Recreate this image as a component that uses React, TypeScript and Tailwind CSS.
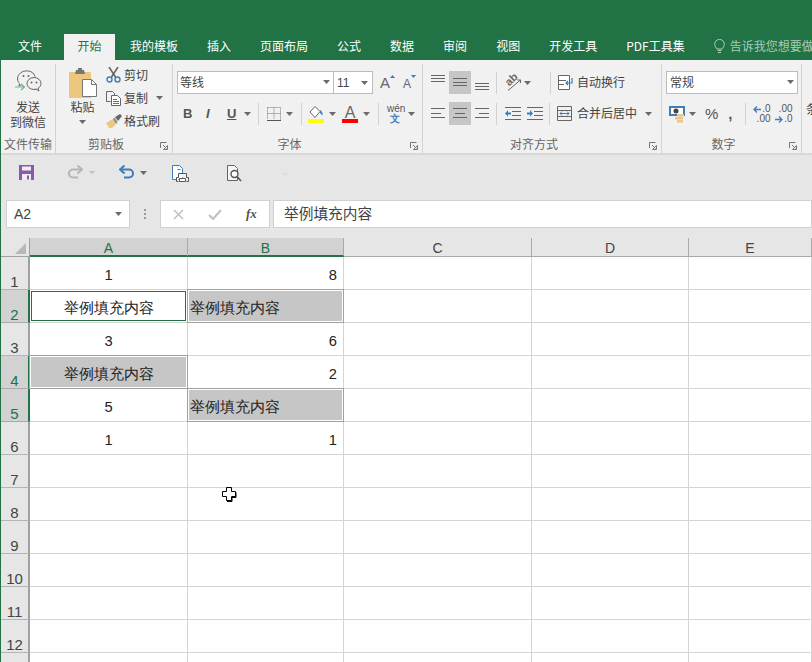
import type { ReactNode } from 'react'

const cjk = { fontFamily: '"Noto Sans CJK SC", "Liberation Sans", sans-serif' }

const Caret = ({ className = '' }: { className?: string }) => (
  <svg width="7" height="4" viewBox="0 0 7 4" className={`shrink-0 ${className}`}>
    <path d="M0 0h7L3.500 4z" fill="#6a6a6a" />
  </svg>
)

const Sep = ({ h = 'h-[22px]', className = '' }: { h?: string, className?: string }) => (
  <div className={`w-px bg-[#d2d2d2] shrink-0 ${h} ${className}`} />
)

const Launcher = () => (
  <svg width="8" height="8" viewBox="0 0 8 8" className="absolute right-[4px] bottom-[4px]">
    <path d="M0.500 6V0.500H6.500" fill="none" stroke="#777" />
    <path d="M3 3l3.500 3.500M7.500 3.500v4h-4z" fill="none" stroke="#777" />
  </svg>
)

const Group = ({ w, label, launcher, children }: { w: string, label: string, launcher?: boolean, children: ReactNode }) => (
  <div className={`${w} shrink-0 flex flex-col h-[90px] mt-[4px] border-r border-[#d2d2d2]`}>
    <div className="flex-1 min-h-0">{children}</div>
    <div className={`relative h-[18px] text-[12px] leading-[16px] text-center text-[#666] ${launcher ? 'pr-[16px]' : ''}`}>
      {label}
      {launcher && <Launcher />}
    </div>
  </div>
)

const AlignBtn = ({ active, children }: { active?: boolean, children: ReactNode }) => (
  <div className={`w-[22px] h-[23px] flex items-center justify-center ${active ? 'bg-[#c6c6c6]' : ''}`}>{children}</div>
)

// three lines for the alignment buttons: [y, from x, to x]
const Lines = ({ rows }: { rows: [number, number, number][] }) => (
  <svg width="14" height="17" viewBox="0 0 14 17">
    {rows.map(([y, a, b]) => <path key={y} d={`M${a} ${y + 0.5}H${b}`} stroke="#666" />)}
  </svg>
)

const Paste = () => (
  <svg width="30" height="30" viewBox="0 0 30 30">
    <path d="M1 4h22v26H1z" fill="#edc77f" />
    <path d="M8 2h2V0h4v2h2l1 4H7z" fill="#777" />
    <path d="M14.500 11.500h9l5 5v12h-14z" fill="#fff" stroke="#777" />
    <path d="M23.500 11.500v5h5" fill="none" stroke="#777" />
  </svg>
)

const Scissors = () => (
  <svg width="15" height="16" viewBox="0 0 15 16">
    <path d="M3 0l6.500 10M12 0L5.500 10" stroke="#666" strokeWidth="1.600" fill="none" />
    <circle cx="3.500" cy="12.500" r="2.500" fill="none" stroke="#3f7cb8" strokeWidth="1.400" />
    <circle cx="11.500" cy="12.500" r="2.500" fill="none" stroke="#3f7cb8" strokeWidth="1.400" />
  </svg>
)

const Copy = () => (
  <svg width="15" height="15" viewBox="0 0 15 15">
    <path d="M0.500 0.500h6l2 2v2M0.500 0.500v10h4" fill="none" stroke="#666" />
    <path d="M5.500 4.500h6l3 3v7h-9z" fill="#fff" stroke="#666" />
    <path d="M7 8.500h4M7 10.500h6M7 12.500h6" stroke="#3f7cb8" />
  </svg>
)

const Brush = () => (
  <svg width="16" height="14" viewBox="0 0 16 14">
    <path d="M0 9l7-4 3 5-4 4H3z" fill="#edc77f" />
    <path d="M7 5l1.500-1.500 3 4.500L10 10z" fill="#8a8a8a" />
    <path d="M9 3l5-3 2 2-4 5z" fill="#666" />
  </svg>
)

const Wechat = () => (
  <svg width="27" height="26" viewBox="0 0 27 26">
    <path d="M4.500 13.500C2 11 2 7 4 4.500 6 1.500 10 0.500 13.500 1c3.500 0.500 6 3 6.500 5.500" fill="none" stroke="#666" />
    <path d="M4.500 13.500L4 16l3-1.500" fill="none" stroke="#666" />
    <ellipse cx="19" cy="13.500" rx="7" ry="6" fill="#f1f1f1" stroke="#666" />
    <path d="M23 18l1 3-3.500-2" fill="#f1f1f1" stroke="#666" />
    <circle cx="8.500" cy="6" r="1" fill="#666" /><circle cx="13.500" cy="6" r="1" fill="#666" />
    <circle cx="16.500" cy="12.500" r="1" fill="#666" /><circle cx="21.500" cy="12.500" r="1" fill="#666" />
    <path d="M0 17h9M6 14l3.500 3L6 20" fill="none" stroke="#6fb58a" strokeWidth="1.200" />
  </svg>
)

const BigA = ({ size, up }: { size: number, up: boolean }) => (
  <div className="flex h-[15px] w-[13px]">
    <span className="self-end text-[#666] leading-none font-['Liberation_Sans']" style={{ fontSize: size }}>A</span>
    <svg width="5" height="3" viewBox="0 0 5 3" className="self-start shrink-0">
      <path d={up ? 'M0 3h5L2.500 0z' : 'M0 0h5L2.500 3z'} fill="#3f7cb8" />
    </svg>
  </div>
)

const BorderIcon = () => (
  <svg width="14" height="14" viewBox="0 0 14 14">
    <path d="M0.500 0.500h13v12M0.500 0.500v12M7 0.500v12M0.500 6.500h13" fill="none" stroke="#777" strokeDasharray="1 1" />
    <path d="M0 13.500h14" stroke="#555" />
  </svg>
)

const FillIcon = () => (
  <div className="flex flex-col items-center w-[16px]">
    <svg width="16" height="13" viewBox="0 0 16 13">
      <path d="M7 0.500l5 5-5 6-5-5.500z" fill="#fff" stroke="#666" />
      <path d="M12 4c2 1 3 3 2.500 5.500-1-1-2-1.500-2.500-3z" fill="#3f7cb8" />
    </svg>
    <div className="w-[16px] h-[4px] bg-[#ffff00]" />
  </div>
)

const FontColorIcon = () => (
  <div className="flex flex-col items-center w-[16px]">
    <span className="text-[16px] leading-[13px] font-['Liberation_Sans'] text-[#666]">A</span>
    <div className="w-[16px] h-[4px] bg-[#ff0000]" />
  </div>
)

const Orientation = () => (
  <div className="relative w-[16px] h-[17px]">
    <span className="absolute left-[0px] top-[0px] -rotate-45 text-[11px] leading-[11px] font-bold text-[#666] font-['Liberation_Sans']">ab</span>
    <svg width="16" height="17" viewBox="0 0 16 17" className="absolute left-0 top-0">
      <path d="M3 16.500L15.500 6" stroke="#666" />
      <path d="M15.500 6v3M15.500 6h-3" stroke="#666" />
    </svg>
  </div>
)

const Indent = ({ right }: { right?: boolean }) => (
  <svg width="16" height="13" viewBox="0 0 16 13">
    <path d="M0 0.500H16M7 4.500H16M7 8.500H16M0 12.500H16" stroke="#666" />
    <path d={right ? 'M0 5.500h3V3l3 3.500-3 3V7.500H0z' : 'M6 5.500H3V3L0 6.500l3 3V7.500h3z'} fill="#3f7cb8" />
  </svg>
)

const Wrap = () => (
  <svg width="15" height="15" viewBox="0 0 15 15">
    <path d="M0.500 0.500h11v14H0.500z" fill="#fff" stroke="#666" />
    <path d="M0 5.500h8M0 9.500h6" stroke="#666" />
    <path d="M14 3v5H8M10 6L8 8l2 2" fill="none" stroke="#3f7cb8" strokeWidth="1.200" />
  </svg>
)

const Merge = () => (
  <svg width="15" height="15" viewBox="0 0 15 15">
    <path d="M0.500 0.500h14v14H0.500zM0 4.500h15M0 10.500h15" fill="none" stroke="#666" />
    <path d="M3 7.500h9M5 5.500l-2 2 2 2M10 5.500l2 2-2 2" fill="none" stroke="#3f7cb8" />
  </svg>
)

const Currency = () => (
  <svg width="16" height="17" viewBox="0 0 16 17">
    <path d="M0 0h16v10H0z" fill="#3f7cb8" />
    <path d="M2 2h12v6H2z" fill="#fff" />
    <circle cx="7" cy="5" r="2.500" fill="#444" />
    <path d="M8 8h7v2.500H8zM6 11h8v2.500H6zM8 14h6v2.500H8z" fill="#edc77f" />
  </svg>
)

const SmallArrow = ({ left }: { left?: boolean }) => (
  <svg width="8" height="7" viewBox="0 0 8 7" className="shrink-0">
    <path d={left ? 'M8 3.500H1M4 0.500l-3 3 3 3' : 'M0 3.500h7M4 0.500l3 3-3 3'} fill="none" stroke="#3f7cb8" strokeWidth="1.300" />
  </svg>
)

const Decimal = ({ more }: { more?: boolean }) => (
  <div className="w-[19px] text-[10px] leading-[10px] text-[#555] font-['Liberation_Sans']">
    <div className="flex items-center justify-end gap-[1px]">{more ? '.00' : <><SmallArrow left />.0</>}</div>
    <div className="flex items-center justify-end gap-[1px]">{more ? <><SmallArrow />.0</> : '.00'}</div>
  </div>
)

const Save = () => (
  <svg width="15" height="15" viewBox="0 0 15 15">
    <path d="M0 0h15v15H0z" fill="#8a5aa8" />
    <path d="M3 1.500h9v4H3z" fill="#f0ecf3" />
    <path d="M3 9h9v6H3z" fill="#f0ecf3" />
    <path d="M8 10.500h2v4H8z" fill="#8a5aa8" />
  </svg>
)

const Arrow = ({ color, flip }: { color: string, flip?: boolean }) => (
  <svg width="15" height="14" viewBox="0 0 15 14" className={flip ? '-scale-x-100' : ''}>
    <path d="M1.500 4.500H10a3.800 3.800 0 0 1 0 8H5" fill="none" stroke={color} strokeWidth="2" />
    <path d="M5.500 0.500l-4.500 4 4.500 4" fill="none" stroke={color} strokeWidth="2" />
  </svg>
)

const PrintPreview = () => (
  <svg width="17" height="17" viewBox="0 0 17 17">
    <path d="M0.500 0.500h7l3 3v11H0.500z" fill="#fff" stroke="#3f7cb8" />
    <path d="M5.500 4.500h3" stroke="#666" />
    <path d="M6.500 8.500h8v4h2v4h-2M6.500 8.500v4h-2v4h2" fill="#f1f1f1" stroke="#555" />
    <path d="M7.500 13.500h6v3h-6z" fill="#fff" stroke="#555" />
  </svg>
)

const Preview = () => (
  <svg width="15" height="17" viewBox="0 0 15 17">
    <path d="M0.500 0.500h7l3 3v12H0.500z" fill="#f6f6f6" stroke="#666" />
    <circle cx="7.500" cy="9" r="3.500" fill="#fff" stroke="#555" strokeWidth="1.400" />
    <path d="M10 11.500l4 4.500" stroke="#555" strokeWidth="1.600" />
  </svg>
)

const Bulb = () => (
  <svg width="11" height="15" viewBox="0 0 11 15">
    <path d="M3 10C2 8.500 0.700 7.500 0.700 5.200a4.800 4.800 0 0 1 9.600 0C10.300 7.500 9 8.500 8 10z" fill="none" stroke="#a9cdb8" />
    <path d="M3.500 11.500h4M4 13.500h3" stroke="#a9cdb8" />
  </svg>
)

const tabs = ['我的模板', '插入', '页面布局', '公式', '数据', '审阅', '视图', '开发工具', 'PDF工具集']
const text = '举例填充内容'

type Cell = { v?: string, align?: 'c' | 'r' | 'l', fill?: boolean, selected?: boolean }
const rows: Cell[][] = [
  [{ v: '1', align: 'c' }, { v: '8', align: 'r' }],
  [{ v: text, align: 'c', selected: true }, { v: text, align: 'l', fill: true }],
  [{ v: '3', align: 'c' }, { v: '6', align: 'r' }],
  [{ v: text, align: 'c', fill: true }, { v: '2', align: 'r' }],
  [{ v: '5', align: 'c' }, { v: text, align: 'l', fill: true }],
  [{ v: '1', align: 'c' }, { v: '1', align: 'r' }],
  [], [], [], [], [], [], [],
]

const SheetCell = ({ cell }: { cell?: Cell }) => {
  const just = cell?.align === 'c' ? 'justify-center' : cell?.align === 'r' ? 'justify-end pr-[6px]' : 'justify-start pl-[1px]'
  const state = cell?.selected
    ? 'bg-white border border-[#217346]'
    : cell?.fill ? 'bg-[#c6c6c6] border border-white outline outline-[#a0a0a0]' : ''
  return (
    <div className={`border-r border-b border-[#d4d4d4] h-[33px] min-w-0 relative ${cell?.selected ? 'p-[1px]' : ''}`}>
      <div className={`h-full w-full flex items-center pt-[4px] ${just} ${state} text-[14.700px] text-[#222]`}>
        {cell?.v}
      </div>
    </div>
  )
}

export default function App() {
  return (
    <div className="relative w-[812px] h-[662px] overflow-hidden bg-white border-l border-[#217346]" style={cjk}>
      {/* title + tabs */}
      <div className="h-[60px] bg-[#217346] flex items-end text-[12px] text-white whitespace-nowrap pl-[17px]">
        <div className="h-[26px] leading-[23px] mr-[22px]">文件</div>
        <div className="h-[26px] leading-[23px] px-[13.500px] mr-[15px] bg-[#f1f1f1] text-[#217346]">开始</div>
        <div className="flex gap-[29px]">
          {tabs.map(t => <div key={t} className="h-[26px] leading-[23px]">{t}</div>)}
        </div>
        <div className="h-[26px] flex items-center gap-[5px] ml-[29px] text-[#a9cdb8] pb-[2px]">
          <Bulb />
          <span>告诉我您想要做什么</span>
        </div>
      </div>

      {/* ribbon */}
      <div className="h-[95px] bg-[#f1f1f1] border-b-2 border-[#d8d8d8] flex text-[12px] text-[#444] whitespace-nowrap">
        <Group w="w-[55px]" label="文件传输">
          <div className="flex flex-col items-center pt-[6px]">
            <Wechat />
            <div className="mt-[3px] leading-[15px] text-center">发送<br />到微信</div>
          </div>
        </Group>

        <Group w="w-[117px]" label="剪贴板" launcher>
          <div className="flex pl-[12px]">
            <div className="flex flex-col items-center w-[29px] pt-[4px]">
              <Paste />
              <div className="mt-[1px] leading-[16px]">粘贴</div>
              <Caret className="mt-[5px]" />
            </div>
            <div className="ml-[9px] flex flex-col pt-[3px] gap-[7px]">
              <div className="flex items-center h-[16px]"><div className="w-[18px]"><Scissors /></div>剪切</div>
              <div className="flex items-center h-[16px]"><div className="w-[18px]"><Copy /></div>复制<Caret className="ml-[8px]" /></div>
              <div className="flex items-center h-[16px]"><div className="w-[18px]"><Brush /></div>格式刷</div>
            </div>
          </div>
        </Group>

        <Group w="w-[250px]" label="字体" launcher>
          <div className="flex items-center pl-[4px] pt-[7px]">
            <div className="w-[157px] h-[23px] bg-white border border-[#bdbdbd] flex items-center justify-between pl-[2px] pr-[3px] pb-[1px]">
              等线<Caret />
            </div>
            <div className="w-[39px] h-[23px] bg-white border border-[#bdbdbd] border-l-0 flex items-center justify-between pl-[3px] pr-[4px] font-['Liberation_Sans']">
              11<Caret />
            </div>
            <div className="ml-[7px] flex gap-[10px]">
              <BigA size={15} up />
              <BigA size={12} up={false} />
            </div>
          </div>
          <div className="flex items-center h-[22px] mt-[9px] pl-[10px] font-['Liberation_Sans'] text-[#555]">
            <span className="w-[22px] font-bold text-[13px]">B</span>
            <span className="w-[22px] italic font-bold text-[13px] pl-[1px]">I</span>
            <span className="w-[17px] underline font-bold text-[13px]">U</span>
            <Caret />
            <Sep className="ml-[7px]" />
            <div className="ml-[8px] mr-[5px]"><BorderIcon /></div>
            <Caret />
            <Sep className="ml-[8px]" />
            <div className="ml-[6px] mr-[5px]"><FillIcon /></div>
            <Caret />
            <div className="ml-[6px] mr-[5px]"><FontColorIcon /></div>
            <Caret />
            <Sep className="ml-[8px]" />
            <div className="ml-[8px] mr-[5px] w-[16px] text-center leading-[10px] text-[10px]">
              <div>wén</div>
              <div className="text-[#3f7cb8] font-bold">文</div>
            </div>
            <Caret />
          </div>
        </Group>

        <Group w="w-[239px]" label="对齐方式" launcher>
          <div className="flex items-center pl-[4px] pt-[7px] h-[30px]">
            <AlignBtn><Lines rows={[[1, 0, 14], [4, 0, 14], [7, 0, 14]]} /></AlignBtn>
            <AlignBtn active><Lines rows={[[4, 0, 14], [8, 0, 14], [11, 0, 14]]} /></AlignBtn>
            <AlignBtn><Lines rows={[[9, 0, 14], [12, 0, 14], [15, 0, 14]]} /></AlignBtn>
            <Sep className="ml-[3px]" />
            <div className="ml-[8px] mr-[3px]"><Orientation /></div>
            <Caret />
            <Sep className="ml-[19px]" />
            <div className="ml-[7px] mr-[4px]"><Wrap /></div>
            <span className="pb-[1px]">自动换行</span>
          </div>
          <div className="flex items-center pl-[4px] mt-[8px] h-[23px]">
            <AlignBtn><Lines rows={[[3, 0, 14], [8, 0, 10], [12, 0, 14]]} /></AlignBtn>
            <AlignBtn active><Lines rows={[[3, 0, 14], [8, 2, 12], [12, 0, 14]]} /></AlignBtn>
            <AlignBtn><Lines rows={[[3, 0, 14], [8, 4, 14], [12, 0, 14]]} /></AlignBtn>
            <Sep className="ml-[3px]" />
            <div className="ml-[8px] flex gap-[6px] mr-[6px]"><Indent /><Indent right /></div>
            <Sep />
            <div className="ml-[7px] mr-[5px]"><Merge /></div>
            <span className="pb-[1px]">合并后居中</span>
            <Caret className="ml-[8px]" />
          </div>
        </Group>

        <Group w="w-[140px]" label="数字" launcher>
          <div className="pl-[4px] pt-[7px]">
            <div className="w-[132px] h-[23px] bg-white border border-[#bdbdbd] flex items-center justify-between pl-[3px] pr-[3px] pb-[1px]">
              常规<Caret />
            </div>
          </div>
          <div className="flex items-center h-[22px] mt-[9px] pl-[7px]">
            <Currency />
            <Caret className="ml-[4px]" />
            <span className="ml-[9px] text-[15px] font-['Liberation_Sans'] text-[#555]">%</span>
            <span className="ml-[10px] text-[15px] font-bold font-['Liberation_Sans'] text-[#555]">,</span>
            <Sep className="ml-[12px]" />
            <div className="ml-[6px]"><Decimal /></div>
            <div className="ml-[3px]"><Decimal more /></div>
          </div>
        </Group>

        <div className="pl-[4px] pt-[40px]">条</div>
      </div>

      {/* quick access */}
      <div className="h-[45px] bg-[#e6e6e6] flex items-start pl-[18px] pt-[10px]">
        <Save />
        <div className="ml-[34px] mr-[6px]"><Arrow color="#b5b5b5" flip /></div>
        <svg width="6" height="3" viewBox="0 0 6 3" className="mt-[6px]"><path d="M0 0h6L3 3z" fill="#c0c0c0" /></svg>
        <div className="ml-[24px] mr-[6px]"><Arrow color="#3f7cb8" /></div>
        <Caret className="mt-[6px]" />
        <div className="ml-[25px]"><PrintPreview /></div>
        <div className="ml-[38px]"><Preview /></div>
        <svg width="6" height="6" viewBox="0 0 6 6" className="ml-[40px] mt-[5px]"><path d="M0 0.500h6M0 3h6l-3 3z" fill="#dcdcdc" stroke="#dedede" strokeWidth="0.500" /></svg>
      </div>

      {/* formula bar */}
      <div className="h-[38px] bg-[#e6e6e6] flex items-start pl-[5px] font-['Liberation_Sans'] text-[#444]">
        <div className="w-[124px] h-[28px] bg-white border border-[#d0d0d0] flex items-center justify-between px-[7px] text-[14px]">
          A2<Caret />
        </div>
        <div className="w-[30px] h-[28px] flex flex-col items-center justify-center gap-[2px]">
          <div className="w-[2px] h-[2px] bg-[#999]" /><div className="w-[2px] h-[2px] bg-[#999]" /><div className="w-[2px] h-[2px] bg-[#999]" />
        </div>
        <div className="w-[110px] h-[28px] bg-white border border-[#d0d0d0] flex items-center pl-[12px]">
          <svg width="11" height="11" viewBox="0 0 11 11"><path d="M1 1l9 9M10 1l-9 9" stroke="#c0c0c0" strokeWidth="1.500" /></svg>
          <svg width="14" height="11" viewBox="0 0 14 11" className="ml-[24px]"><path d="M1 6l4 4 8-9" fill="none" stroke="#c0c0c0" strokeWidth="2" /></svg>
          <span className="ml-[24px] italic font-bold text-[13px] text-[#555] font-['Liberation_Serif']">fx</span>
        </div>
        <div className="ml-[3px] flex-1 h-[28px] bg-white border border-[#d0d0d0] flex items-center pl-[10px] pb-[1px] text-[14.700px]" style={cjk}>
          {text}
        </div>
      </div>

      {/* sheet */}
      <div className="grid grid-cols-[29px_158px_156px_188px_157px_1fr] font-['Liberation_Sans']">
        <div className="h-[19px] bg-[#e6e6e6] border-r border-b border-[#a0a0a0] flex items-end justify-end pr-[3px] pb-[2px]">
          <svg width="11" height="11" viewBox="0 0 11 11"><path d="M11 0v11H0z" fill="#b8b8b8" /></svg>
        </div>
        {['A', 'B', 'C', 'D', 'E'].map((c, i) => (
          <div key={c} className={`h-[19px] border-r flex items-center justify-center text-[14px] leading-none pt-[2px] ${i < 2 ? 'bg-[#d2d2d2] border-[#a9a9a9] border-b-2 border-b-[#217346] text-[#217346]' : 'bg-[#e6e6e6] border-[#a9a9a9] border-b border-b-[#a9a9a9] text-[#444]'}`}>
            {c}
          </div>
        ))}
        {rows.map((r, i) => {
          const sel = i === 1 || i === 3 || i === 4
          return [
            <div key={`h${i}`} className={`h-[33px] border-b border-r-[2px] flex items-end justify-center text-[15px] leading-none ${sel ? 'bg-[#d2d2d2] border-b-[#a9a9a9] border-r-[#217346] text-[#217346]' : 'bg-[#e6e6e6] border-b-[#b5b5b5] border-r-[#a0a0a0] text-[#444]'}`}>
              {i < 12 && i + 1}
            </div>,
            <SheetCell key={`a${i}`} cell={r[0]} />,
            <SheetCell key={`b${i}`} cell={r[1]} />,
            <SheetCell key={`c${i}`} />,
            <SheetCell key={`d${i}`} />,
            <SheetCell key={`e${i}`} />,
          ]
        })}
      </div>

      {/* mouse pointer over the sheet */}
      <svg width="15" height="15" viewBox="0 0 15 15" className="absolute left-[221px] top-[487px]">
        <path d="M4.500 0.500h5v4h4v5h-4v4h-5v-4h-4v-5h4z" fill="#fff" stroke="#000" />
        <path d="M5 14.500h5v-4h4v-5" fill="none" stroke="#000" />
      </svg>
    </div>
  )
}
